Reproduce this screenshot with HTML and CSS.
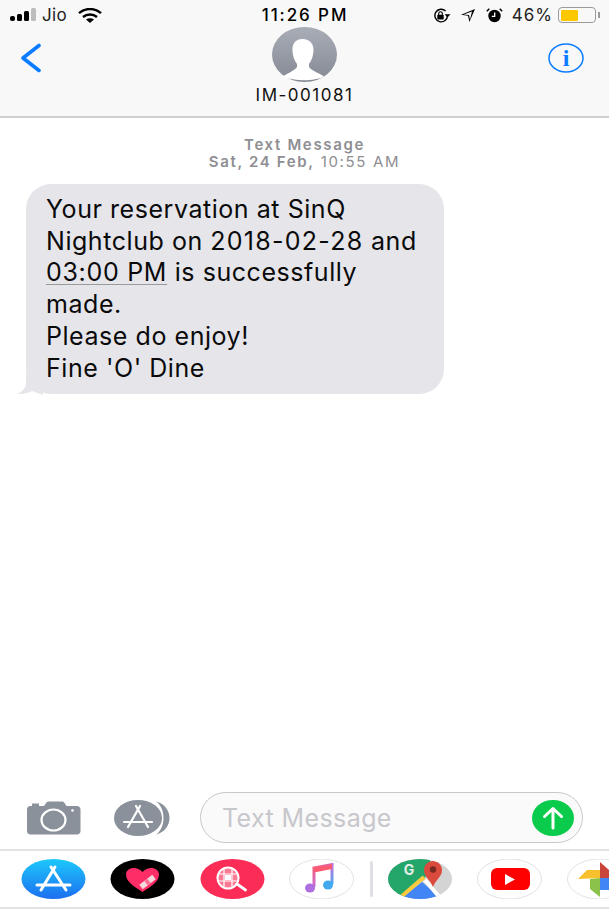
FILE: index.html
```html
<!DOCTYPE html>
<html lang="en">
<head>
<meta charset="utf-8">
<title>Messages</title>
<link rel="stylesheet" href="styles.css">
</head>
<body>
<div class="screen">
  <header class="top">
    <div class="status">
      <div class="status-left">
        <svg class="signal" width="27" height="14" viewBox="0 0 27 14"><rect x="0" y="8" width="5" height="5" rx="2" fill="#000"/><rect x="7" y="6" width="5" height="7" rx="1.5" fill="#000"/><rect x="14" y="3" width="5" height="10" rx="1.5" fill="#000"/><rect x="21" y="0" width="5" height="13" rx="1.5" fill="#bdbdbd"/></svg>
        <span class="carrier">Jio</span>
        <svg class="wifi" width="24" height="15" viewBox="0 0 24 15"><path d="M1 5.2C7 -0.4 17 -0.4 23 5.2" fill="none" stroke="#000" stroke-width="2.4"/><path d="M5 9C9 5.6 15 5.6 19 9" fill="none" stroke="#000" stroke-width="2.4"/><path d="M8 11.6C10.5 9.8 13.5 9.8 16 11.6L12 15Z" fill="#000"/></svg>
      </div>
      <div class="clock">11:26 PM</div>
      <div class="status-right">
        <svg width="20" height="15" viewBox="0 0 20 15"><path d="M16.5 7.5A6.3 6.3 0 1 1 14.6 3" fill="none" stroke="#000" stroke-width="1.4"/><path d="M19.5 6.2L16.5 9.6L13.6 6.2Z" fill="#000"/><rect x="6.3" y="6.8" width="6.4" height="4.6" rx=".7" fill="#000"/><path d="M7.7 7V5.5A1.8 1.8 0 0 1 11.3 5.5V7" fill="none" stroke="#000" stroke-width="1.1"/></svg>
        <svg class="gap-arrow" width="16" height="15" viewBox="0 0 16 15"><path d="M15 1L1 6.7L8 7.7L9.4 14Z M12 3.6L3.6 6.6L9 7L10 11.5Z" fill="#000" fill-rule="evenodd"/></svg>
        <svg class="gap-alarm" width="17" height="15" viewBox="0 0 17 15"><circle cx="8.5" cy="8" r="6.2" fill="#000"/><path d="M8.7 4.5V8.3H5.8" fill="none" stroke="#fff" stroke-width="1.3"/><path d="M.8 3.2L3.3 .8M16.2 3.2L13.7 .8" stroke="#000" stroke-width="1.5"/></svg>
        <span class="pct">46%</span>
        <div class="battery"><div class="battery-fill"></div></div>
        <div class="battery-nub"></div>
      </div>
    </div>
    <div class="nav">
      <svg class="back" width="22" height="30" viewBox="0 0 22 30"><path d="M19 2.5L3 15L19 27.5" fill="none" stroke="#0a7cff" stroke-width="3.6" stroke-linecap="round" stroke-linejoin="round"/></svg>
      <div class="contact">
        <svg class="avatar" width="65" height="55" viewBox="0 0 65 55"><defs><linearGradient id="av" x1="0" y1="0" x2="0" y2="1"><stop offset="0" stop-color="#a9adb6"/><stop offset="1" stop-color="#858994"/></linearGradient></defs><ellipse cx="32.5" cy="27.5" rx="32.5" ry="27.5" fill="url(#av)"/><path d="M30.500 12C23 12 20 17 20.500 24C20.800 29 22 33 25 37V40C22 44 16 46 11 49.500C22 54.500 42 54.500 52 49.500C47 46 40 44 37 40V37C40 33 41 29 41.500 24C42 17 38 12 30.500 12Z" fill="#fff"/></svg>
        <div class="name">IM-001081</div>
      </div>
      <svg class="info" width="36" height="30" viewBox="0 0 36 30"><ellipse cx="18" cy="15" rx="17" ry="14" fill="none" stroke="#0a7cff" stroke-width="1.500"/><text x="18" y="23" text-anchor="middle" class="info-i">i</text></svg>
    </div>
  </header>

  <main class="thread">
    <div class="stamp">
      <div class="stamp-strong">Text Message</div>
      <div><span class="stamp-strong">Sat, 24 Feb,</span> 10:55 AM</div>
    </div>
    <div class="bubble-wrap">
      <svg class="tail" width="26" height="22" viewBox="0 0 26 22"><path d="M9 0V10C9 15 5 19 0 21C6 21.500 11 20 15 18L26 22V0Z" fill="#e5e5ea"/></svg>
      <div class="bubble">Your reservation at SinQ<br>Nightclub on <span class="digits">2018-02-28</span> and<br><span class="link">03:00 PM</span> is successfully<br>made.<br>Please do enjoy!<br>Fine 'O' Dine</div>
    </div>
  </main>

  <section class="composer">
    <svg width="54" height="34" viewBox="0 0 54 34"><path d="M5 5H12V2.500H5ZM3 5H17L19.500 1.500C20 .8 21 .5 22 .5H35C36 .5 37 1 37.500 2L39.500 5H50C52 5 53.500 6.500 53.500 8.500V30C53.500 32 52 33.500 50 33.500H3.500C1.500 33.500 0 32 0 30V8.500C0 6.500 1.500 5 3 5Z" fill="#8a919b"/><ellipse cx="26.500" cy="19" rx="12" ry="10.500" fill="none" stroke="#fff" stroke-width="2.200"/><circle cx="45.500" cy="9.500" r="1.300" fill="#fff"/></svg>
    <svg class="apps-btn" width="58" height="36" viewBox="0 0 58 36"><path d="M42 1.500C60 6 60 30 42 34.500C52 28 52 8 42 1.500Z" fill="#8a919b"/><ellipse cx="24" cy="18" rx="24" ry="18" fill="#8a919b"/><g stroke="#fff" stroke-width="2.200" stroke-linecap="round" fill="none"><path d="M26 6L14 27M22 6L34 27M10 22H38"/></g></svg>
    <div class="input">
      <span class="placeholder">Text Message</span>
      <svg width="44" height="36" viewBox="0 0 44 36"><ellipse cx="22" cy="18" rx="21" ry="18" fill="#0acb4c"/><path d="M22 28V9M13.500 16.500L22 8.500L30.500 16.500" fill="none" stroke="#fff" stroke-width="3" stroke-linecap="round" stroke-linejoin="round"/></svg>
    </div>
  </section>

  <nav class="strip">
    <svg width="65" height="40" viewBox="0 0 65 40"><defs><linearGradient id="as" x1="0" y1="0" x2="0" y2="1"><stop offset="0" stop-color="#1cc8fb"/><stop offset="1" stop-color="#1d6ff0"/></linearGradient></defs><ellipse cx="32.500" cy="20" rx="32" ry="20" fill="url(#as)"/><g stroke="#fff" stroke-width="3" stroke-linecap="round" fill="none"><path d="M34 8L20 31M30 8L45 31M16 26H49"/></g></svg>
    <svg width="65" height="40" viewBox="0 0 65 40"><ellipse cx="32.500" cy="20" rx="32" ry="20" fill="#000"/><path d="M32.500 33C25 28 16 23 16 15.500C16 8 27 6.500 32.500 13C38 6.500 49 8 49 15.500C49 23 40 28 32.500 33Z" fill="#ff2d67"/><path d="M31 28L44 18" stroke="#f4d9dd" stroke-width="5.500"/><path d="M36 24.200L39 21.800" stroke="#ff6f91" stroke-width="5.500"/></svg>
    <svg width="65" height="40" viewBox="0 0 65 40"><ellipse cx="32.500" cy="20" rx="32" ry="20" fill="#fb2c55"/><circle cx="28" cy="19" r="10.500" fill="#fb7a93" stroke="#fff" stroke-width="2"/><path d="M19 15H37M18.500 22H37.500M24 10V28M32 10V28" stroke="#fff" stroke-width="1.200"/><rect x="25" y="16" width="6" height="5" fill="#fff"/><path d="M37 25L45.500 31" stroke="#fff" stroke-width="2.800" stroke-linecap="round"/></svg>
    <svg width="65" height="40" viewBox="0 0 65 40"><defs><linearGradient id="mu" x1="0" y1="0" x2="1" y2="1"><stop offset="0" stop-color="#fb5c74"/><stop offset=".5" stop-color="#c86dd7"/><stop offset="1" stop-color="#3fb4f5"/></linearGradient></defs><ellipse cx="32.500" cy="20" rx="32" ry="20" fill="#fff" stroke="#e3e3e6"/><path d="M25 28V9L43 5.500V25" fill="none" stroke="url(#mu)" stroke-width="3"/><path d="M25 8.500L43 5V10L25 13.500Z" fill="#fb5c74"/><ellipse cx="21" cy="29" rx="5" ry="4.500" fill="#b06fe0"/><ellipse cx="39" cy="26" rx="5" ry="4.500" fill="#42a8f0"/></svg>
    <div class="sep"></div>
    <svg width="65" height="40" viewBox="0 0 65 40"><defs><clipPath id="mp"><ellipse cx="32" cy="20" rx="32" ry="20"/></clipPath></defs><g clip-path="url(#mp)"><rect width="65" height="40" fill="#d4d4d4"/><path d="M0 0H42V14L12 40H0Z" fill="#24a56a"/><path d="M34 23L12 40H54Z" fill="#4285f4"/><path d="M36 18L14 37" stroke="#f9cb3d" stroke-width="4"/><path d="M37 21L53 40" stroke="#fff" stroke-width="4"/><path d="M45 28C42 20 36 18 36 11C36 6 40 2 45 2C50 2 54 6 54 11C54 18 48 20 45 28Z" fill="#da4b3e"/><circle cx="45" cy="10.500" r="3.200" fill="#7b2a22"/></g><text x="21" y="16" text-anchor="middle" class="g">G</text></svg>
    <svg width="65" height="40" viewBox="0 0 65 40"><ellipse cx="32.500" cy="20" rx="32" ry="20" fill="#fff" stroke="#e3e3e6"/><rect x="14" y="9" width="39" height="22" rx="6" fill="#f00"/><path d="M28 15L38 20.500L28 26Z" fill="#fff"/></svg>
    <svg class="photos" width="65" height="40" viewBox="0 0 65 40"><ellipse cx="32.500" cy="20" rx="32" ry="20" fill="#fff" stroke="#e3e3e6"/><path d="M33 3L42 11V19H33Z" fill="#c9453b"/><path d="M33 19H42V31H33Z" fill="#4285f4"/><path d="M33 19V38L23 30V20Z" fill="#8bc34a"/><path d="M11 20L20 11H33V19Z" fill="#f9c02e"/></svg>
  </nav>
</div>
</body>
</html>
```

FILE: styles.css
```css
* { box-sizing: border-box; }
html, body { margin: 0; padding: 0; }
body { background: #fff; font-family: Inter, "Liberation Sans", Arial, sans-serif; color: #000; }
svg { display: block; flex: none; }

.screen { width: 609px; height: 909px; display: flex; flex-direction: column; overflow: hidden; }

.top { height: 118px; background: #f8f8f8; border-bottom: 2px solid #cfcfd1; flex: none; }
.status { height: 27px; padding: 3px 9px 0 10px; display: grid; grid-template-columns: 1fr auto 1fr; align-items: center; }
.status-left { display: flex; align-items: center; }
.carrier { font-size: 17px; letter-spacing: .4px; margin-left: 5px; color: #222; }
.wifi { margin-left: 11px; }
.clock { font-size: 17px; font-weight: 500; letter-spacing: 1.900px; }
.status-right { display: flex; align-items: center; justify-content: flex-end; }
.gap-arrow { margin-left: 9px; }
.gap-alarm { margin-left: 10px; }
.pct { font-size: 17px; letter-spacing: 1px; margin-left: 9px; color: #222; }
.battery { width: 38px; height: 16px; border: 1.500px solid #9b9b9b; border-radius: 4px; margin-left: 5px; padding: 1.500px; }
.battery-fill { width: 52%; height: 100%; background: #fdc800; border-radius: 1px; }
.battery-nub { width: 2px; height: 6px; background: #9b9b9b; margin-left: 2px; }

.nav { height: 88px; display: grid; grid-template-columns: 1fr auto 1fr; align-items: start; padding: 0 25px; }
.back { margin: 16px 0 0 -5px; }
.contact { display: flex; flex-direction: column; align-items: center; }
.name { font-size: 17px; letter-spacing: 1.500px; margin-top: 3px; color: #111; }
.info { justify-self: end; margin-top: 16px; }
.info-i { font-family: "Liberation Serif", serif; font-size: 24px; font-weight: 700; fill: #0a7cff; }

.thread { flex: 1; min-height: 0; padding-top: 18px; }
.stamp { text-align: center; font-size: 15px; line-height: 17px; color: #8e8e93; letter-spacing: 1.650px; }
.stamp-strong { font-weight: 600; }
.bubble-wrap { position: relative; margin: 14px 0 0 26px; width: 418px; }
.bubble { position: relative; background: #e5e5ea; border-radius: 25px; padding: 10px 20px; font-size: 25px; line-height: 31.700px; letter-spacing: .55px; color: #0a0a0a; }
.digits { letter-spacing: 1.250px; }
.tail { position: absolute; left: -9px; bottom: -1px; }
.link { letter-spacing: .7px; text-decoration: underline; text-decoration-color: #9a9a9a; text-decoration-thickness: 1px; text-underline-offset: 3px; }

.composer { height: 57px; flex: none; display: flex; align-items: center; padding: 0 26px 6px 27px; }
.apps-btn { margin-left: 33px; }
.input { margin-left: 28px; flex: 1; height: 51px; border: 1.500px solid #c8c8cc; border-radius: 26px; background: #fafafa; display: flex; align-items: center; justify-content: space-between; padding: 0 7px 0 21px; }
.placeholder { font-size: 25px; letter-spacing: .4px; color: #c7c7cc; }

.strip { flex: none; height: 60px; border-top: 2px solid #e2e2e4; border-bottom: 2px solid #e2e2e4; padding: 8px 0 0 21px; display: flex; align-items: flex-start; gap: 24.300px; overflow: hidden; }
.sep { width: 3px; height: 36px; margin: 2px -9.500px 0 -8px; background: #dfe0e6; border-radius: 2px; flex: none; }
.g { font-size: 14px; font-weight: 700; fill: #e8efe9; }
```
